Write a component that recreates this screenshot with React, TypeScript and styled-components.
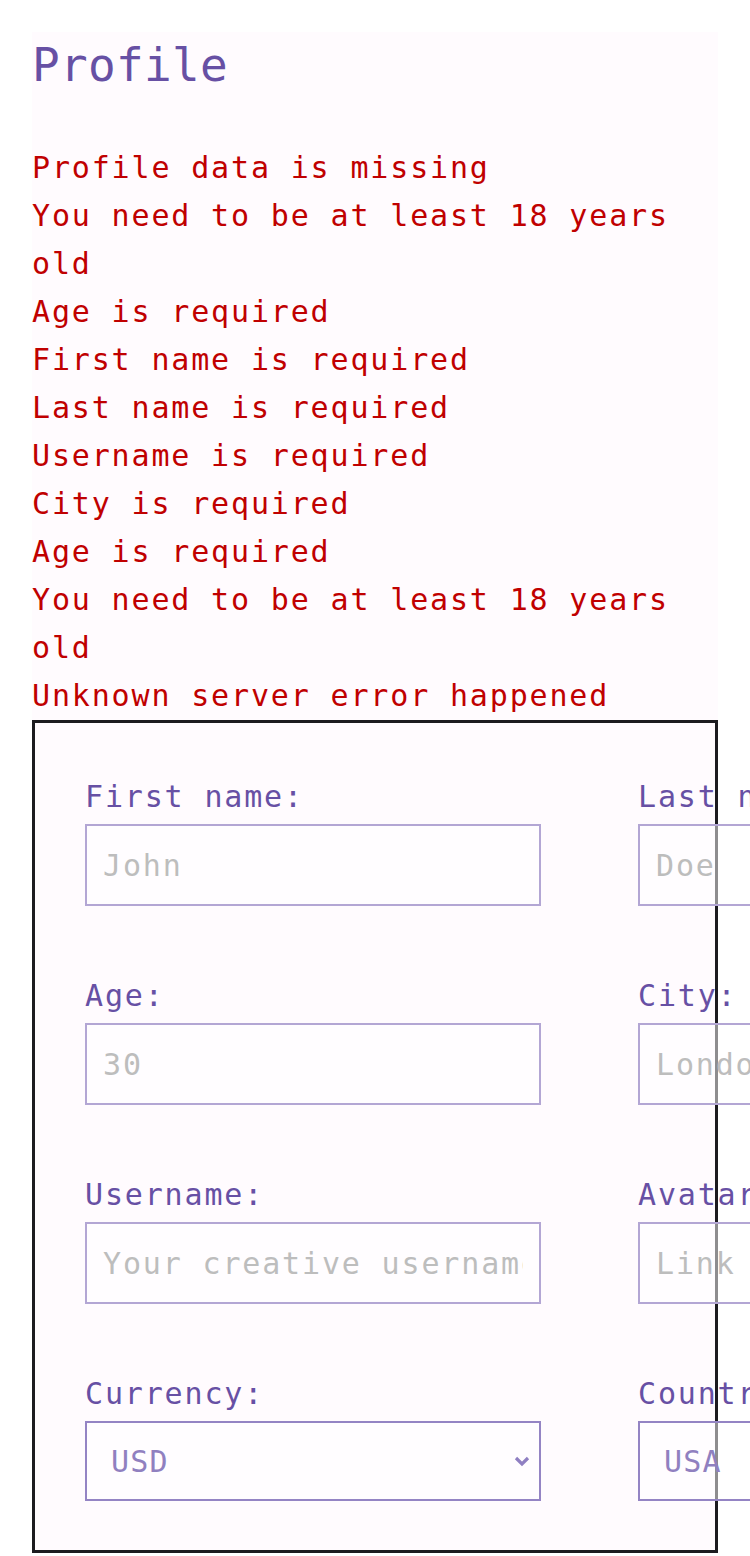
import React from 'react';
import styled, { createGlobalStyle } from 'styled-components';

const GlobalStyle = createGlobalStyle`
    html, body {
        margin: 0;
        padding: 0;
        background: #ffffff;
        overflow-x: hidden;
    }
    body {
        padding: 32px;
        font-family: "DejaVu Sans Mono", "Liberation Mono", monospace;
    }
`;

const Page = styled.div`
    width: 686px;
    background: #fffbfe;
`;

const Title = styled.h1`
    margin: 0 0 48px 0;
    font-size: 46px;
    line-height: 66px;
    font-weight: 400;
    letter-spacing: 0.3px;
    color: #6750a4;
`;

const ErrorList = styled.div`
    display: flex;
    flex-direction: column;
    margin-top: -2px;
`;

const ErrorText = styled.div`
    font-size: 30px;
    line-height: 48px;
    letter-spacing: 1.84px;
    color: #c00000;
`;

const Form = styled.form`
    border: 3px solid #1c1b1f;
    padding: 54px 0 49px 50px;
`;

const Grid = styled.div`
    display: grid;
    grid-template-columns: 456px 456px;
    column-gap: 97px;
    row-gap: 70px;
`;

const Field = styled.label`
    display: flex;
    flex-direction: column;
    gap: 7px;
`;

const Label = styled.span`
    font-size: 30px;
    line-height: 40px;
    letter-spacing: 1.84px;
    color: #6750a4;
`;

const Input = styled.input`
    box-sizing: border-box;
    width: 456px;
    height: 82px;
    margin: 0;
    padding: 0 16px;
    border: 2px solid #b3a6d4;
    border-radius: 0;
    background: rgba(255, 255, 255, 0.5);
    font-family: inherit;
    font-size: 30px;
    letter-spacing: 1.84px;
    color: #1c1b1f;
    outline: none;

    &::placeholder {
        color: #bdbdbd;
    }
`;

const SelectBox = styled.div`
    position: relative;
    width: 456px;
    height: 80px;
`;

const Select = styled.select`
    box-sizing: border-box;
    width: 100%;
    height: 100%;
    margin: 0;
    padding: 0 0 0 24px;
    border: 2px solid #9484c4;
    border-radius: 0;
    background: rgba(255, 255, 255, 0.5);
    appearance: none;
    font-family: inherit;
    font-size: 30px;
    letter-spacing: 1.2px;
    color: #9080c0;
    outline: none;
`;

const Chevron = styled.svg`
    position: absolute;
    right: 11px;
    top: 34px;
    width: 16px;
    height: 12px;
    pointer-events: none;
`;

const fields = [
    { label: 'First name:', placeholder: 'John' },
    { label: 'Last name:', placeholder: 'Doe' },
    { label: 'Age:', placeholder: '30' },
    { label: 'City:', placeholder: 'London' },
    { label: 'Username:', placeholder: 'Your creative username' },
    { label: 'Avatar:', placeholder: 'Link to your avatar' },
];

const errors = [
    'Profile data is missing',
    'You need to be at least 18 years old',
    'Age is required',
    'First name is required',
    'Last name is required',
    'Username is required',
    'City is required',
    'Age is required',
    'You need to be at least 18 years old',
    'Unknown server error happened',
];

const ChevronIcon = () => (
    <Chevron viewBox="0 0 16 12">
        <path d="M2 3 L8 9 L14 3" fill="none" stroke="#8f7fc2" strokeWidth="3.2" />
    </Chevron>
);

export default function App() {
    return (
        <>
            <GlobalStyle />
            <Page>
                <Title>Profile</Title>
                <ErrorList>
                    {errors.map((e, i) => (
                        <ErrorText key={i}>{e}</ErrorText>
                    ))}
                </ErrorList>
                <Form onSubmit={ev => ev.preventDefault()}>
                    <Grid>
                        {fields.map(f => (
                            <Field key={f.label}>
                                <Label>{f.label}</Label>
                                <Input placeholder={f.placeholder} />
                            </Field>
                        ))}
                        <Field>
                            <Label>Currency:</Label>
                            <SelectBox>
                                <Select defaultValue="USD">
                                    <option value="USD">USD</option>
                                    <option value="EUR">EUR</option>
                                    <option value="RUB">RUB</option>
                                </Select>
                                <ChevronIcon />
                            </SelectBox>
                        </Field>
                        <Field>
                            <Label>Country:</Label>
                            <SelectBox>
                                <Select defaultValue="USA">
                                    <option value="USA">USA</option>
                                    <option value="Russia">Russia</option>
                                </Select>
                                <ChevronIcon />
                            </SelectBox>
                        </Field>
                    </Grid>
                </Form>
            </Page>
        </>
    );
}
